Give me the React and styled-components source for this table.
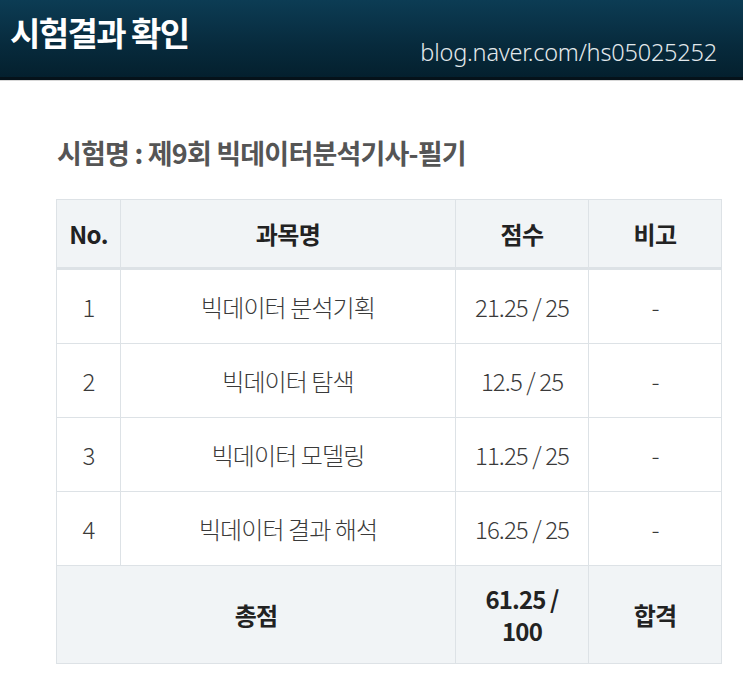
import React from "react";
import styled, { createGlobalStyle } from "styled-components";

const Global = createGlobalStyle`
  html, body { margin: 0; padding: 0; background: #fff; }
  body { font-family: "Noto Sans CJK KR", "Noto Sans", sans-serif; }
`;

const Header = styled.header`
  height: 77px;
  background: linear-gradient(180deg, #0c3c54 0%, #072a3c 60%, #04202e 100%);
  border-bottom: 3px solid #05121a;
  box-shadow: 0 1px 0 #d8d8d8;
  display: flex;
  justify-content: space-between;
  padding: 0 26px 0 10px;
`;

const Title = styled.h1`
  margin: 0;
  padding-top: 9px;
  align-self: flex-start;
  color: #fff;
  font-size: 33px;
  font-weight: 700;
  letter-spacing: -1.6px;
  line-height: 46px;
`;

const Url = styled.div`
  align-self: flex-end;
  padding-bottom: 9px;
  color: #e3e9ec;
  font-family: "Noto Sans", sans-serif;
  font-size: 23.5px;
  font-weight: 300;
  letter-spacing: -0.2px;
  line-height: 32px;
`;

const Main = styled.main`
  padding: 50px 22px 20px 56px;
`;

const ExamName = styled.h2`
  margin: 0 0 23px 1px;
  color: #555;
  font-size: 27px;
  font-weight: 700;
  letter-spacing: -0.8px;
  line-height: 46px;
`;

const Table = styled.table`
  width: 666px;
  border-collapse: collapse;
  table-layout: fixed;
  border: 1px solid #dde2e6;
`;

const Col = styled.col`
  width: ${(p) => p.$w}px;
`;

const Th = styled.th`
  height: 67px;
  padding: 0;
  background: #f1f4f6;
  border: 1px solid #dde2e6;
  border-bottom: 3px solid #dde2e6;
  color: #222;
  font-size: 24px;
  font-weight: 700;
  letter-spacing: -0.6px;
`;

const Td = styled.td`
  height: 73px;
  border: 1px solid #dde2e6;
  text-align: center;
  color: #3a3a3a;
  font-size: 24px;
  font-weight: 300;
  letter-spacing: -0.9px;
  padding: 0;
`;

const TotalCell = styled.td`
  height: 97px;
  background: #f1f4f6;
  border: 1px solid #dde2e6;
  text-align: center;
  color: #222;
  font-size: 24px;
  font-weight: 700;
  letter-spacing: -0.9px;
  line-height: 32px;
  padding: 0;
`;

const rows = [
  ["1", "빅데이터 분석기획", "21.25 / 25"],
  ["2", "빅데이터 탐색", "12.5 / 25"],
  ["3", "빅데이터 모델링", "11.25 / 25"],
  ["4", "빅데이터 결과 해석", "16.25 / 25"],
];

export default function App() {
  return (
    <>
      <Global />
      <Header>
        <Title>시험결과 확인</Title>
        <Url>blog.naver.com/hs05025252</Url>
      </Header>
      <Main>
        <ExamName>시험명 : 제9회 빅데이터분석기사-필기</ExamName>
        <Table>
          <colgroup>
            <Col $w={64} />
            <Col $w={335} />
            <Col $w={133} />
            <Col $w={133} />
          </colgroup>
          <thead>
            <tr>
              <Th>No.</Th>
              <Th>과목명</Th>
              <Th>점수</Th>
              <Th>비고</Th>
            </tr>
          </thead>
          <tbody>
            {rows.map(([n, name, score]) => (
              <tr key={n}>
                <Td>{n}</Td>
                <Td>{name}</Td>
                <Td>{score}</Td>
                <Td>-</Td>
              </tr>
            ))}
            <tr>
              <TotalCell colSpan={2}>총점</TotalCell>
              <TotalCell>
                61.25 /
                <br />
                100
              </TotalCell>
              <TotalCell>합격</TotalCell>
            </tr>
          </tbody>
        </Table>
      </Main>
    </>
  );
}
